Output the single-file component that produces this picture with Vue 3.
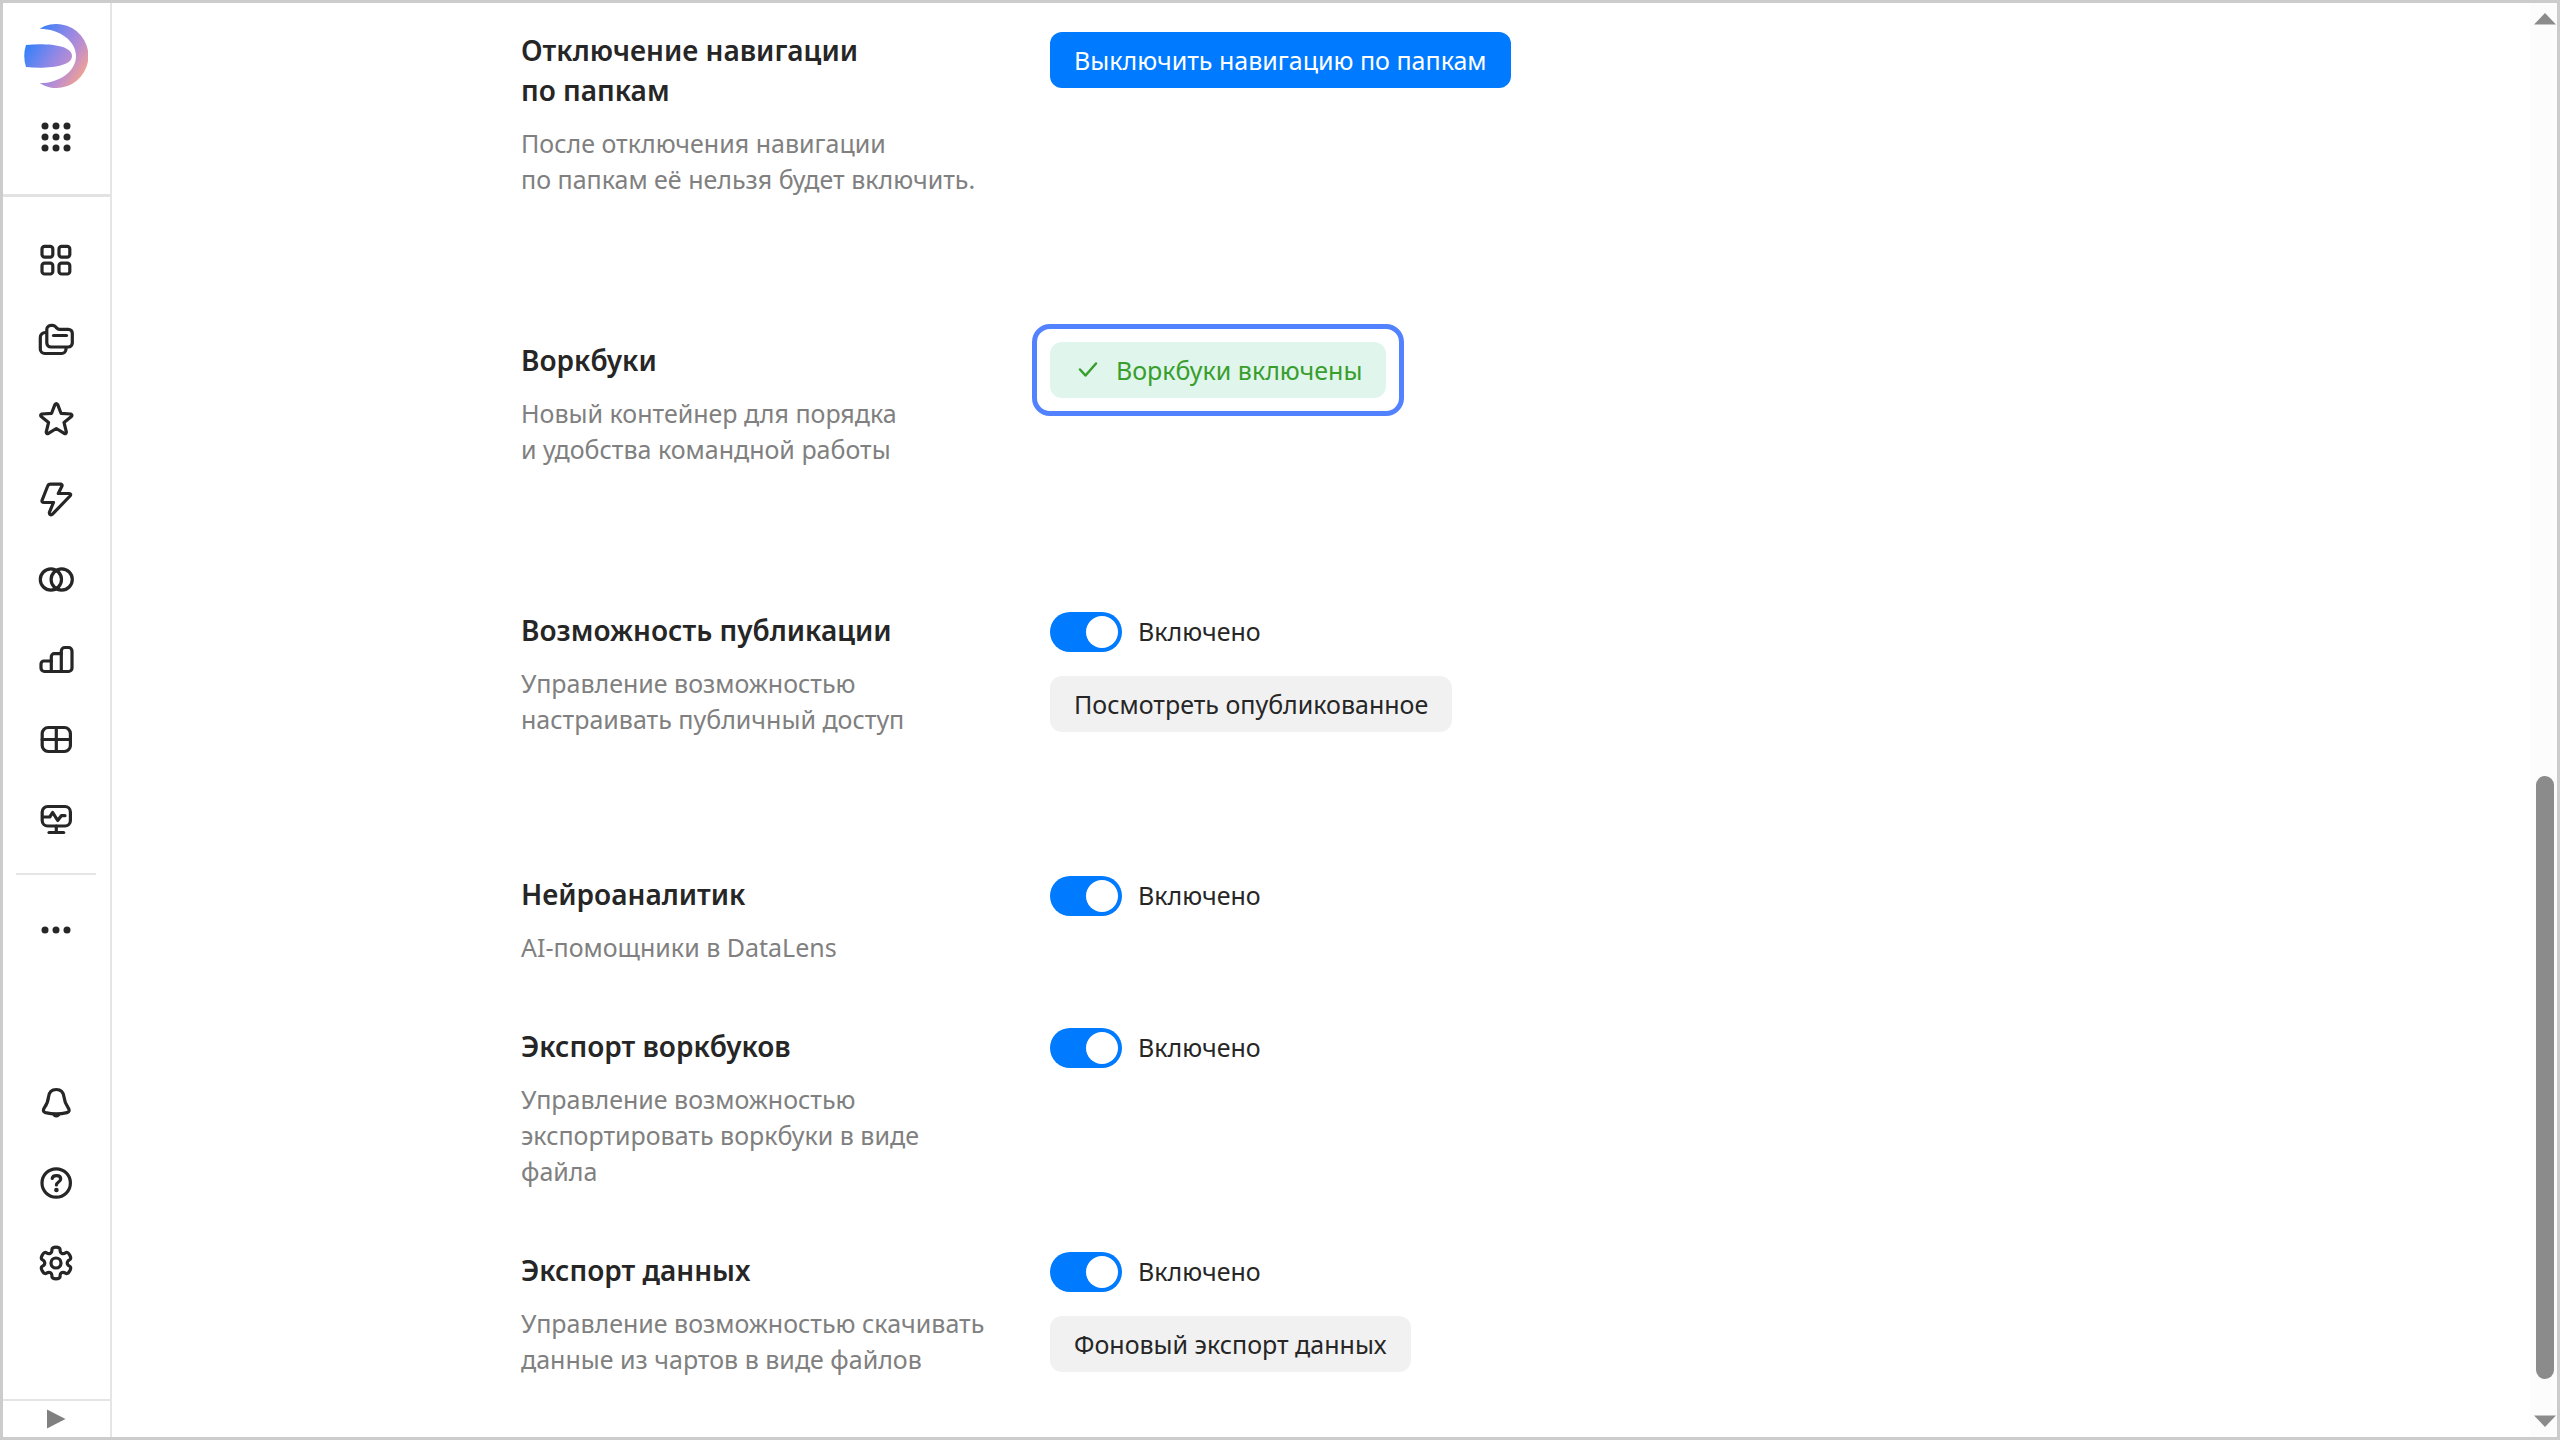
<script setup>
import { reactive } from 'vue'

const gearPath = (() => {
  const c = 18
  const pts = []
  for (let k = 0; k < 6; k++) {
    for (const [r, a] of [[16.4, -15], [16.4, 15], [11.4, 20], [11.4, 40]]) {
      const t = ((k * 60 + a) * Math.PI) / 180
      pts.push([c + r * Math.sin(t), c - r * Math.cos(t)])
    }
  }
  const mid = (p, q) => `${((p[0] + q[0]) / 2).toFixed(2)} ${((p[1] + q[1]) / 2).toFixed(2)}`
  const n = pts.length
  let d = `M${mid(pts[n - 1], pts[0])}`
  pts.forEach((p, i) => {
    d += `Q${p[0].toFixed(2)} ${p[1].toFixed(2)} ${mid(p, pts[(i + 1) % n])}`
  })
  return d + 'Z'
})()

const tile = (x, y) => `M${x + 2.6} ${y}h5.6a2.6 2.6 0 0 1 2.6 2.6v5.6a2.6 2.6 0 0 1-2.6 2.6h-5.6a2.6 2.6 0 0 1-2.6-2.6v-5.6a2.6 2.6 0 0 1 2.6-2.6Z`

const mainNav = [
  { id: 'home', label: 'Главная', paths: [tile(4, 4.4), tile(21, 4.4), tile(4, 21.2), tile(21, 21.2)] },
  { id: 'collections', label: 'Коллекции', paths: ['M8.8 7.5a4.2 4.2 0 0 1 4.2-4.2h1.5c1.2 0 2.3.5 3.1 1.4l1 1.2c.8.9 1.6 1.4 3 1.4H30.3a4 4 0 0 1 4 4V21a4 4 0 0 1-4 4H12.8a4 4 0 0 1-4-4Z', 'M7.5 10.5A5 5 0 0 0 2.3 15.5V27a4.5 4.5 0 0 0 4.500 4.500H23.600a4.500 4.500 0 0 0 4.400-4.500V25.500', 'M15.500 13.500H28.500'] },
  { id: 'favorites', label: 'Избранное', paths: ['M16.9 2.6Q18.3.6 19.7 2.6L23 11.300 32.800 12Q34.800 12.800 33.400 14.600L26 20.400 28.400 30.200Q28.200 32.200 26.200 31.400L18.300 26.500 10.400 31.400Q8.400 32.200 8.200 30.200L10.600 20.400 3.200 14.600Q1.800 12.800 3.800 12L13.600 11.300Z'] },
  { id: 'connections', label: 'Подключения', paths: ['M12.5 2.2H22.5Q24.5 2.2 24 4L20.3 11.5H31Q33.8 11.8 32 14L14.5 32.2Q11.5 34 11.3 30.5L15.5 20.5H6Q3.3 20.5 4.2 18L9.5 4.5Q10.3 2.2 12.5 2.2Z'] },
  { id: 'datasets', label: 'Датасеты', paths: ['M12.9 6.9a10.6 10.6 0 1 0 0 21.2a10.6 10.6 0 1 0 0-21.2Z', 'M23.7 6.9a10.6 10.6 0 1 0 0 21.2a10.6 10.6 0 1 0 0-21.2Z'] },
  { id: 'charts', label: 'Чарты', paths: ['M6.5 29.5A3.5 3.5 0 0 1 3 26V22A3 3 0 0 1 6 19H13.3V14.7A3 3 0 0 1 16.3 11.7H23.3V9A3.5 3.5 0 0 1 26.8 5.5H30.5A3.5 3.5 0 0 1 34 9V26A3.5 3.5 0 0 1 30.5 29.5Z', 'M13.3 19V29.5', 'M23.3 11.7V29.5'] },
  { id: 'dashboards', label: 'Дашборды', paths: ['M10.2 5.5H26.4a6 6 0 0 1 6 6V23.5a6 6 0 0 1-6 6H10.2a6 6 0 0 1-6-6V11.5a6 6 0 0 1 6-6Z', 'M18.3 5.5V29.5', 'M4.2 17.5H32.4'] },
  { id: 'monitoring', label: 'Отчёты', paths: ['M9.7 4.5H26.9a5.5 5.5 0 0 1 5.5 5.5V18.5a5.5 5.5 0 0 1-5.5 5.5H9.7a5.5 5.5 0 0 1-5.5-5.5V10a5.5 5.5 0 0 1 5.5-5.5Z', 'M5 15H11.7L14.7 10.5 19.7 18.5 23.3 13.7H27', 'M18.3 24V30.5', 'M11 30.5H25.7'] }
]

const rows = reactive([
  { id: 'folders', title: 'Отключение навигации\nпо папкам', text: 'После отключения навигации\nпо папкам её нельзя будет включить.', action: 'Выключить навигацию по папкам', view: 'primary' },
  { id: 'workbooks', title: 'Воркбуки', text: 'Новый контейнер для порядка\nи удобства командной работы', status: 'Воркбуки включены' },
  { id: 'publish', title: 'Возможность публикации', text: 'Управление возможностью\nнастраивать публичный доступ', toggle: true, on: true, action: 'Посмотреть опубликованное', view: 'normal' },
  { id: 'neuro', title: 'Нейроаналитик', text: 'AI-помощники в DataLens', toggle: true, on: true },
  { id: 'export-workbooks', title: 'Экспорт воркбуков', text: 'Управление возможностью\nэкспортировать воркбуки в виде\nфайла', toggle: true, on: true },
  { id: 'export-data', title: 'Экспорт данных', text: 'Управление возможностью скачивать\nданные из чартов в виде файлов', toggle: true, on: true, action: 'Фоновый экспорт данных', view: 'normal' }
])
</script>

<template>
  <div class="app">
    <aside class="sidebar">
      <header class="brand">
        <a class="logo" href="#" aria-label="DataLens">
          <svg width="64" height="64" viewBox="0 0 64 64">
            <defs>
              <linearGradient id="brand-fill" gradientUnits="userSpaceOnUse" x1="6" y1="16" x2="60" y2="50">
                <stop offset="0" stop-color="#3381fb" />
                <stop offset="0.45" stop-color="#9087e6" />
                <stop offset="0.72" stop-color="#bd8ecf" />
                <stop offset="1" stop-color="#f0a191" />
              </linearGradient>
            </defs>
            <path fill="url(#brand-fill)" d="M15.7 4.7A32 32 0 1 1 15.7 59.3C36 59 52 47 52 32S36 5 15.7 4.7Z" />
            <path fill="url(#brand-fill)" d="M2 21C22 19 48 21 48 32S22 45 2 43Q-1.5 32 2 21Z" />
          </svg>
        </a>
        <button class="nav-btn apps" type="button" aria-label="Сервисы">
          <svg class="solid" viewBox="0 0 36 36">
            <template v-for="y in [7, 18, 29]" :key="y">
              <circle v-for="x in [7, 18, 29]" :key="x" :cx="x" :cy="y" r="3.5" />
            </template>
          </svg>
        </button>
      </header>

      <nav class="nav">
        <a v-for="item in mainNav" :key="item.id" class="nav-btn" href="#" :aria-label="item.label">
          <svg viewBox="0 0 36 36"><path v-for="d in item.paths" :key="d" :d="d" /></svg>
        </a>
      </nav>
      <hr class="divider" />
      <button class="nav-btn more" type="button" aria-label="Ещё">
        <svg class="solid" viewBox="0 0 36 36"><circle v-for="x in [7, 18, 29]" :key="x" :cx="x" cy="18" r="3.5" /></svg>
      </button>

      <div class="tools">
        <button class="nav-btn" type="button" aria-label="Уведомления">
          <svg viewBox="0 0 36 36">
            <path d="M18.3 4.5C13.5 4.5 11 7.5 10.500 12C10 17 9.500 18.500 6.500 22.500C4.500 25.500 5.200 27 7.500 27.600C13.500 29 23 29 29 27.600C31.400 27 32 25.500 30 22.500C27 18.500 26.600 17 26 12C25.500 7.500 23 4.500 18.300 4.500Z" />
            <path class="filled" d="M14 29H22.6A4.400 4.400 0 0 1 14 29Z" />
          </svg>
        </button>
        <button class="nav-btn" type="button" aria-label="Помощь">
          <svg viewBox="0 0 36 36">
            <circle cx="18.2" cy="18" r="14.2" />
            <path d="M14.2 13.5C14.700 9.500 22.700 9.500 22.700 13.900C22.700 17 18.400 17 18.400 20" />
            <circle class="dot" cx="18.4" cy="25" r="2.3" />
          </svg>
        </button>
        <button class="nav-btn" type="button" aria-label="Настройки">
          <svg viewBox="0 0 36 36">
            <path :d="gearPath" />
            <circle cx="18" cy="18" r="5" />
          </svg>
        </button>
      </div>
      <button class="expand" type="button" aria-label="Развернуть">
        <svg width="20" height="20" viewBox="0 0 20 20"><path d="M1 .5 19.5 10 1 19.5Z" /></svg>
      </button>
    </aside>

    <main class="content">
      <section v-for="row in rows" :key="row.id" class="row" :class="row.id">
        <div class="info">
          <h2>{{ row.title }}</h2>
          <p>{{ row.text }}</p>
        </div>
        <div class="controls">
          <label v-if="row.toggle" class="switch">
            <input v-model="row.on" type="checkbox" role="switch" />
            <span>{{ row.on ? 'Включено' : 'Выключено' }}</span>
          </label>
          <button v-if="row.status" class="btn success" type="button">
            <svg width="20" height="20" viewBox="0 0 20 20"><path d="M2 9.5 7.5 15.5 18 3.5" /></svg>
            {{ row.status }}
          </button>
          <button v-if="row.action" class="btn" :class="row.view" type="button">{{ row.action }}</button>
        </div>
      </section>
    </main>

    <div class="scrollbar" aria-hidden="true">
      <svg width="22" height="12" viewBox="0 0 22 12"><path d="M11 0 22 11.5H0Z" /></svg>
      <div class="before"></div>
      <div class="thumb"></div>
      <div class="after"></div>
      <svg width="22" height="12" viewBox="0 0 22 12"><path d="M0 .5H22L11 12Z" /></svg>
    </div>
  </div>
</template>

<style>
body {
  margin: 0;
  background: #fff;
}
</style>

<style scoped>
.app {
  box-sizing: border-box;
  display: flex;
  min-height: 100vh;
  border: 3px solid #ccc;
  background: #fff;
  color: #262626;
  font-family: "Noto Sans", "Open Sans", sans-serif;
  font-size: 25px;
  line-height: 36px;
}

button {
  padding: 0;
  border: 0;
  background: none;
  color: inherit;
  font: inherit;
  cursor: pointer;
}

svg {
  display: block;
}

.sidebar {
  box-sizing: border-box;
  display: flex;
  flex-direction: column;
  flex: none;
  width: 109px;
  border-right: 2px solid #e5e5e5;
}

.brand {
  display: flex;
  flex-direction: column;
  align-items: center;
  gap: 9px;
  padding: 21px 0 17px;
  border-bottom: 3px solid #e2e2e2;
}

.logo {
  padding-right: 2px;
}

.nav-btn {
  box-sizing: border-box;
  display: flex;
  align-items: center;
  justify-content: center;
  width: 100%;
  height: 80px;
  padding-right: 2px;
}

.nav-btn svg {
  width: 36px;
  height: 36px;
  fill: none;
  stroke: #262626;
  stroke-width: 3.2;
  stroke-linecap: round;
  stroke-linejoin: round;
}

.nav-btn svg.solid,
.nav-btn .filled,
.nav-btn .dot {
  fill: #262626;
  stroke: none;
}

.nav {
  padding-top: 23px;
}

.divider {
  box-sizing: border-box;
  width: 80px;
  margin: 13px 14px 15px 13px;
  border: 0;
  border-top: 2px solid #e5e5e5;
}

.tools {
  margin-top: auto;
}

.expand {
  display: flex;
  align-items: center;
  justify-content: center;
  height: 38px;
  margin-top: 96px;
  padding-right: 2px;
  border-top: 2px solid #e5e5e5;
  fill: #808080;
}

.content {
  flex: 1;
  padding: 27px 48px 24px 409px;
}

.row {
  display: flex;
  gap: 49px;
  margin-bottom: 61px;
}

.row.folders,
.row.workbooks {
  margin-bottom: 143px;
}

.row.publish {
  margin-bottom: 137px;
}

.row:last-child {
  margin-bottom: 0;
}

.info {
  flex: none;
  width: 480px;
  white-space: pre;
}

h2 {
  margin: 0 0 15px;
  font-size: 28px;
  font-weight: 600;
  line-height: 40px;
}

p {
  margin: 0;
  color: #808080;
}

.controls {
  display: flex;
  flex-direction: column;
  align-items: flex-start;
  gap: 24px;
  padding-top: 2px;
}

.btn {
  position: relative;
  box-sizing: border-box;
  display: flex;
  align-items: center;
  height: 56px;
  padding: 0 24px;
  border-radius: 12px;
  white-space: nowrap;
}

.primary {
  background: #007aff;
  color: #fff;
}

.normal {
  background: #f1f1f1;
}

.success {
  gap: 18px;
  padding-left: 28px;
  background: #e0f5eb;
  color: #389e2c;
}

.success svg {
  fill: none;
  stroke: currentColor;
  stroke-width: 2.5;
  stroke-linecap: round;
  stroke-linejoin: round;
}

.success::after {
  content: "";
  position: absolute;
  inset: -18px;
  border: 5px solid #5282ff;
  border-radius: 18px;
}

.switch {
  display: flex;
  align-items: center;
  gap: 16px;
  height: 40px;
}

.switch span {
  padding-bottom: 3px;
}

.switch input {
  appearance: none;
  display: flex;
  width: 72px;
  height: 40px;
  margin: 0;
  padding: 4px;
  box-sizing: border-box;
  border-radius: 20px;
  background: #b3b3b3;
}

.switch input::before {
  content: "";
  width: 32px;
  height: 32px;
  border-radius: 50%;
  background: #fff;
}

.switch input:checked {
  justify-content: flex-end;
  background: #007aff;
}

.scrollbar {
  display: flex;
  flex-direction: column;
  align-items: center;
  flex: none;
  width: 27px;
  padding: 10px 0 10px 2px;
  box-sizing: border-box;
  background: #fcfcfc;
  fill: #8b8b8b;
}

.before {
  flex: 752;
}

.thumb {
  flex: 603;
  width: 18px;
  border-radius: 9px;
  background: #8b8b8b;
}

.after {
  flex: 36;
}
</style>
